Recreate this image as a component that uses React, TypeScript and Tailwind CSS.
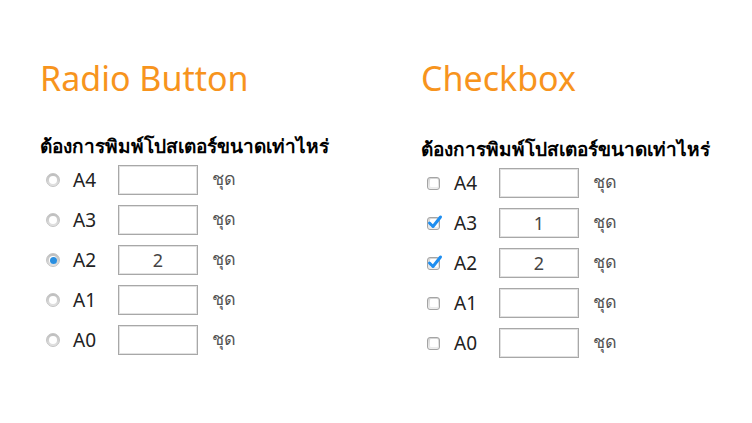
import { useState } from "react";

const sizes = ["A4", "A3", "A2", "A1", "A0"];

const font = { fontFamily: '"Noto Sans", "Open Sans", sans-serif' };

const Radio = ({ checked }: { checked: boolean }) => (
  <span className="flex h-[14px] w-[14px] items-center justify-center rounded-full border border-[#c4c4c4] bg-gradient-to-b from-[#bdbdbd] to-[#e4e4e4]">
    <span className="flex h-[8px] w-[8px] items-center justify-center rounded-full bg-white">
      {checked && <span className="h-[7px] w-[7px] rounded-full bg-[#2a8fe0]" />}
    </span>
  </span>
);

const Check = ({ checked }: { checked: boolean }) => (
  <span className="relative flex h-[13px] w-[13px] items-center justify-center rounded-[3px] border border-[#a4a4a4] bg-gradient-to-b from-[#d4d4d4] to-[#efefef]">
    <span className="h-[8px] w-[8px] rounded-[1px] bg-white" />
    {checked && (
      <svg className="absolute -left-[1px] -top-[4px]" width="16" height="16" viewBox="0 0 16 16">
        <path d="M2.5 9 L6 12.5 L13.5 3" fill="none" stroke="#1e8ef0" strokeWidth="3" strokeLinecap="round" strokeLinejoin="round" />
      </svg>
    )}
  </span>
);

const Row = ({
  control,
  label,
  value,
}: {
  control: React.ReactNode;
  label: string;
  value: string;
}) => (
  <div className="flex h-[40px] items-center">
    <div className="flex w-[33px] pl-[6px]">{control}</div>
    <div className="w-[45px] text-[19px] text-[#222]">{label}</div>
    <input
      readOnly
      value={value}
      className="h-[30px] w-[80px] border border-[#a8a8a8] text-center text-[18px] text-[#444] shadow-[inset_0_0_0_1px_#e2e2e2] outline-none"
    />
    <div className="ml-[14px] -translate-y-[2px] text-[18px] text-[#555]">ชุด</div>
  </div>
);

export default function App() {
  const [radio] = useState("A2");
  const checks: Record<string, string> = { A3: "1", A2: "2" };

  return (
    <div className="h-[423px] w-[752px] bg-white pl-[40px] pt-[58px]" style={font}>
      <div className="grid grid-cols-[381px_1fr]">
        <div>
          <h1 className="text-[34px] leading-[40px] text-[#f7941d]">Radio Button</h1>
          <h2 className="mt-[34px] text-[19px] font-bold leading-[28px] text-black">
            ต้องการพิมพ์โปสเตอร์ขนาดเท่าไหร่
          </h2>
          <div>
            {sizes.map((s) => (
              <Row
                key={s}
                control={<Radio checked={radio === s} />}
                label={s}
                value={radio === s ? "2" : ""}
              />
            ))}
          </div>
        </div>
        <div>
          <h1 className="text-[34px] leading-[40px] text-[#f7941d]">Checkbox</h1>
          <h2 className="mt-[37px] text-[19px] font-bold leading-[28px] text-black">
            ต้องการพิมพ์โปสเตอร์ขนาดเท่าไหร่
          </h2>
          <div>
            {sizes.map((s) => (
              <Row key={s} control={<Check checked={!!checks[s]} />} label={s} value={checks[s] ?? ""} />
            ))}
          </div>
        </div>
      </div>
    </div>
  );
}
